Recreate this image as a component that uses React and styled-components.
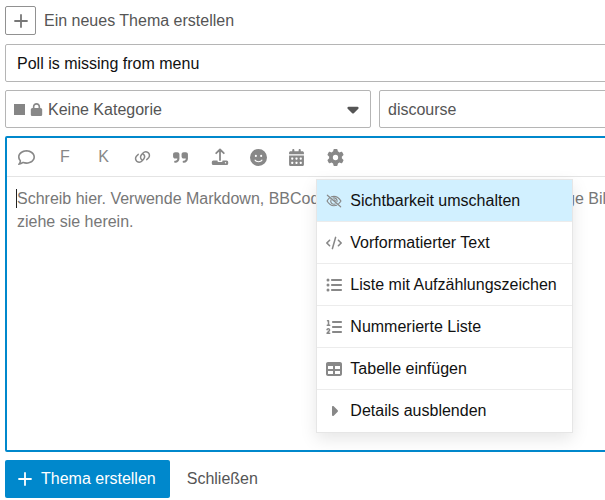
import React from 'react';
import styled, { createGlobalStyle } from 'styled-components'
import {
    FaRegComment, FaQuoteRight, FaFaceSmile, FaCalendarDays, FaGear, FaCode,
    FaListUl, FaListOl, FaTable, FaCaretRight, FaCaretDown, FaLock
} from 'react-icons/fa6';

const GlobalStyle = createGlobalStyle`
    * {
        box-sizing: border-box;
    }
    body {
        margin: 0;
        background: #fff;
        font-family: "Liberation Sans", Arial, sans-serif;
        font-size: 16px;
        color: #555;
    }
    button, input, select, textarea {
        font: inherit;
        color: inherit;
        margin: 0;
    }
`

const Page = styled.main`
    overflow: hidden;
`

/* the composer runs past the right edge of the window */
const Composer = styled.form`
    width: calc(100% + 145px);
    padding: 5px 5px 0;
    display: flex;
    flex-direction: column;
    gap: 8px;
`

const Header = styled.div`
    display: flex;
    align-items: center;
    gap: 8px;
    height: 31px;
`

const ActionButton = styled.button`
    width: 31px;
    height: 29px;
    padding: 0;
    display: flex;
    align-items: center;
    justify-content: center;
    background: #fff;
    border: 1px solid #919191;
    border-radius: 2px;
    color: #777;
`

const HeaderTitle = styled.span`
    line-height: 20px;
`

const TextField = styled.input`
    width: 100%;
    height: 38px;
    padding: 2px ${props => props.$pad}px 0;
    background: #fff;
    border: 1px solid #b5b5b5;
    border-radius: 2px;
    outline: none;
    color: ${props => props.$strong ? '#111' : '#555'};
`

const Fields = styled.div`
    display: grid;
    grid-template-columns: 1fr 1fr;
    gap: 8px;
`

const CategoryField = styled.label`
    height: 38px;
    padding: 0 8px;
    display: flex;
    align-items: center;
    gap: 5px;
    border: 1px solid #b5b5b5;
    border-radius: 2px;
    color: #888;
`

const CategoryBadge = styled.span`
    width: 11px;
    height: 11px;
    background: #858585;
`

const CategorySelect = styled.select`
    flex: 1;
    appearance: none;
    border: 0;
    outline: none;
    padding: 0;
    background: transparent;
    color: #555;
`

const Caret = styled(FaCaretDown)`
    color: #555;
`

const Editor = styled.div`
    height: 316px;
    display: flex;
    flex-direction: column;
    border: 2px solid #0088cc;
    border-radius: 2px;
`

const Toolbar = styled.div`
    height: 39px;
    flex: none;
    border-bottom: 1px solid #e4e4e4;
`

const ToolbarButtons = styled.div`
    width: 348px;
    height: 100%;
    display: grid;
    grid-template-columns: repeat(9, 1fr);
`

const ToolSlot = styled.div`
    position: relative;
    display: flex;
`

const ToolButton = styled.button`
    flex: 1;
    padding: 0;
    display: flex;
    align-items: center;
    justify-content: center;
    background: transparent;
    border: 0;
    color: #888;
`

const Menu = styled.div`
    position: absolute;
    z-index: 2;
    top: 41px;
    left: 0;
    width: 257px;
    background: #fff;
    border: 1px solid #e6e6e6;
    box-shadow: 0 6px 16px rgba(0, 0, 0, 0.1);
`

const MenuItem = styled.button`
    width: 100%;
    height: 42px;
    padding: 0 9px;
    display: flex;
    align-items: center;
    gap: 8px;
    background: ${props => props.$active ? '#d1f0ff' : '#fff'};
    border: 0;
    border-bottom: 1px solid #ececec;
    color: #111;
    text-align: left;
    white-space: nowrap;

    &:last-child {
        border-bottom: 0;
    }

    svg {
        flex: none;
        color: #888;
    }
`

const Writing = styled.div`
    position: relative;
    flex: 1;
    display: flex;
`

const TextArea = styled.textarea`
    flex: 1;
    padding: 10px;
    border: 0;
    outline: none;
    resize: none;
    background: transparent;
    line-height: 23px;
    caret-color: transparent;

    &::placeholder {
        color: #777;
        opacity: 1;
    }
`

const TextCursor = styled.span`
    position: absolute;
    top: 12px;
    left: 9px;
    width: 1px;
    height: 19px;
    background: #222;
`

const Footer = styled.div`
    display: flex;
    align-items: center;
    gap: 17px;
`

const SubmitButton = styled.button`
    height: 38px;
    padding: 0 14px 0 12px;
    display: flex;
    align-items: center;
    gap: 8px;
    background: #0088cc;
    border: 0;
    border-radius: 2px;
    color: #fff;
`

const CloseLink = styled.a`
    color: #555;
    text-decoration: none;
`

const PlusIcon = () => (
    <svg width="16" height="16" viewBox="0 0 16 16" fill="none" stroke="currentColor" strokeWidth="1.8" strokeLinecap="round">
        <path d="M8 2v12M2 8h12" />
    </svg>
)

const LinkIcon = () => (
    <svg width="17" height="16" viewBox="0 0 17 16" fill="none" stroke="currentColor" strokeWidth="1.5" strokeLinecap="round">
        <path d="M7.800 10.800C6.300 9.600 6.100 7.500 7.300 6L8.800 4.300C10.200 2.800 12.500 2.500 14.100 3.700C15.700 5 15.900 7.200 14.600 8.700L12.800 10.600" />
        <path d="M9.200 5.200C10.700 6.400 10.900 8.500 9.700 10L8.200 11.700C6.800 13.200 4.500 13.500 2.900 12.300C1.300 11 1.100 8.800 2.400 7.300L4.200 5.400" />
    </svg>
)

const UploadIcon = () => (
    <svg width="18" height="18" viewBox="0 0 18 18">
        <path d="M9 12V2M5.200 5.200L9 1.500L12.800 5.200" fill="none" stroke="currentColor" strokeWidth="1.800" strokeLinecap="round" strokeLinejoin="round" />
        <path d="M2.300 12.500H6.500V13a1 1 0 0 0 1 1h3a1 1 0 0 0 1-1v-.5h4.200a1.500 1.500 0 0 1 1.500 1.500v1.500a1.500 1.500 0 0 1-1.500 1.500H2.300a1.500 1.500 0 0 1-1.500-1.500V14a1.500 1.500 0 0 1 1.500-1.500z" fill="currentColor" />
        <circle cx="14.500" cy="14.800" r=".7" fill="#fff" />
    </svg>
)

const HiddenIcon = () => (
    <svg width="16" height="16" viewBox="0 0 18 16" fill="none" stroke="currentColor" strokeWidth="1.300" strokeLinecap="round">
        <path d="M1.500 1.500L16.500 14.500" />
        <path d="M6 3.200C10 1.900 14.200 3.800 16.800 8C16.200 9.100 15.300 10.200 14.300 11" />
        <path d="M3.700 4.800C2.700 5.700 1.800 6.800 1.200 8C3.700 12.200 8 14.100 12 12.800" />
        <path d="M8 4.700A3.500 3.500 0 0 1 12.400 8.800M5.600 6.800A3.500 3.500 0 0 0 10.300 11.300" />
        <path d="M9 6.700A1.600 1.600 0 0 1 10.600 8" />
    </svg>
)

const tools = [
    { label: 'Zitat', icon: <FaRegComment size={17} /> },
    { label: 'Fett', icon: 'F' },
    { label: 'Kursiv', icon: 'K' },
    { label: 'Link', icon: <LinkIcon /> },
    { label: 'Blockzitat', icon: <FaQuoteRight size={17} /> },
    { label: 'Hochladen', icon: <UploadIcon /> },
    { label: 'Emoji', icon: <FaFaceSmile size={17} /> },
    { label: 'Datum', icon: <FaCalendarDays size={17} /> },
]

const options = [
    { label: 'Sichtbarkeit umschalten', icon: <HiddenIcon />, active: true },
    { label: 'Vorformatierter Text', icon: <FaCode size={16} /> },
    { label: 'Liste mit Aufzählungszeichen', icon: <FaListUl size={16} /> },
    { label: 'Nummerierte Liste', icon: <FaListOl size={16} /> },
    { label: 'Tabelle einfügen', icon: <FaTable size={16} /> },
    { label: 'Details ausblenden', icon: <FaCaretRight size={16} /> },
]

export default function App() {
    return (
        <Page>
            <GlobalStyle />
            <Composer onSubmit={e => e.preventDefault()}>
                <Header>
                    <ActionButton type="button" aria-label="Aktionen"><PlusIcon /></ActionButton>
                    <HeaderTitle>Ein neues Thema erstellen</HeaderTitle>
                </Header>

                <TextField $strong $pad={11} aria-label="Titel" defaultValue="Poll is missing from menu" />

                <Fields>
                    <CategoryField>
                        <CategoryBadge />
                        <FaLock size={13} />
                        <CategorySelect aria-label="Kategorie">
                            <option>Keine Kategorie</option>
                        </CategorySelect>
                        <Caret size={18} />
                    </CategoryField>
                    <TextField $pad={8} aria-label="Schlagwörter" defaultValue="discourse" />
                </Fields>

                <Editor>
                    <Toolbar>
                        <ToolbarButtons>
                            {tools.map(tool => (
                                <ToolButton key={tool.label} type="button" aria-label={tool.label}>{tool.icon}</ToolButton>
                            ))}
                            <ToolSlot>
                                <ToolButton type="button" aria-label="Optionen"><FaGear size={17} /></ToolButton>
                                <Menu>
                                    {options.map(option => (
                                        <MenuItem key={option.label} type="button" $active={option.active}>
                                            {option.icon}
                                            {option.label}
                                        </MenuItem>
                                    ))}
                                </Menu>
                            </ToolSlot>
                        </ToolbarButtons>
                    </Toolbar>
                    <Writing>
                        <TextArea
                            aria-label="Beitrag"
                            placeholder="Schreib hier. Verwende Markdown, BBCode oder HTML zur Formatierung. Füge Bilder ein oder ziehe sie herein."
                        />
                        <TextCursor />
                    </Writing>
                </Editor>

                <Footer>
                    <SubmitButton type="submit"><PlusIcon />Thema erstellen</SubmitButton>
                    <CloseLink href="#">Schließen</CloseLink>
                </Footer>
            </Composer>
        </Page>
    )
}
